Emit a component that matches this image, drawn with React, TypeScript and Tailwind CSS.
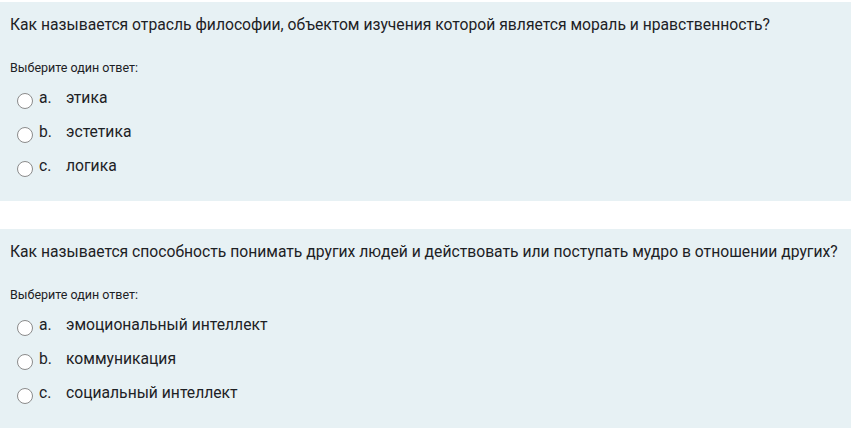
const questions = [
  {
    text: "Как называется отрасль философии, объектом изучения которой является мораль и нравственность?",
    answers: ["этика", "эстетика", "логика"],
  },
  {
    text: "Как называется способность понимать других людей и действовать или поступать мудро в отношении других?",
    answers: ["эмоциональный интеллект", "коммуникация", "социальный интеллект"],
  },
];

const letters = ["a.", "b.", "c."];

function Question({ text, answers }: { text: string; answers: string[] }) {
  return (
    <div className="h-[199px] bg-[#e7f1f4] pl-[10px] pt-[12px] text-[#1d2125]">
      <p className="whitespace-nowrap text-[15.7px] leading-[22px]">{text}</p>
      <p className="mt-[24px] text-[12.5px] leading-[16px]">Выберите один ответ:</p>
      <ul className="mt-[5px]">
        {answers.map((a, i) => (
          <li key={a} className="flex h-[34px] items-center">
            <span className="ml-[7px] mt-[6px] h-[16px] w-[16px] shrink-0 rounded-full border border-[#8b8b8b] bg-white" />
            <span className="ml-[6px] w-[27px] text-[15.7px]">{letters[i]}</span>
            <span className="text-[15.7px]">{a}</span>
          </li>
        ))}
      </ul>
    </div>
  );
}

export default function App() {
  return (
    <div className="flex h-[429px] w-[851px] flex-col gap-[28px] overflow-hidden bg-white pt-[2px] font-['Roboto',sans-serif]">
      {questions.map((q) => (
        <Question key={q.text} {...q} />
      ))}
    </div>
  );
}
